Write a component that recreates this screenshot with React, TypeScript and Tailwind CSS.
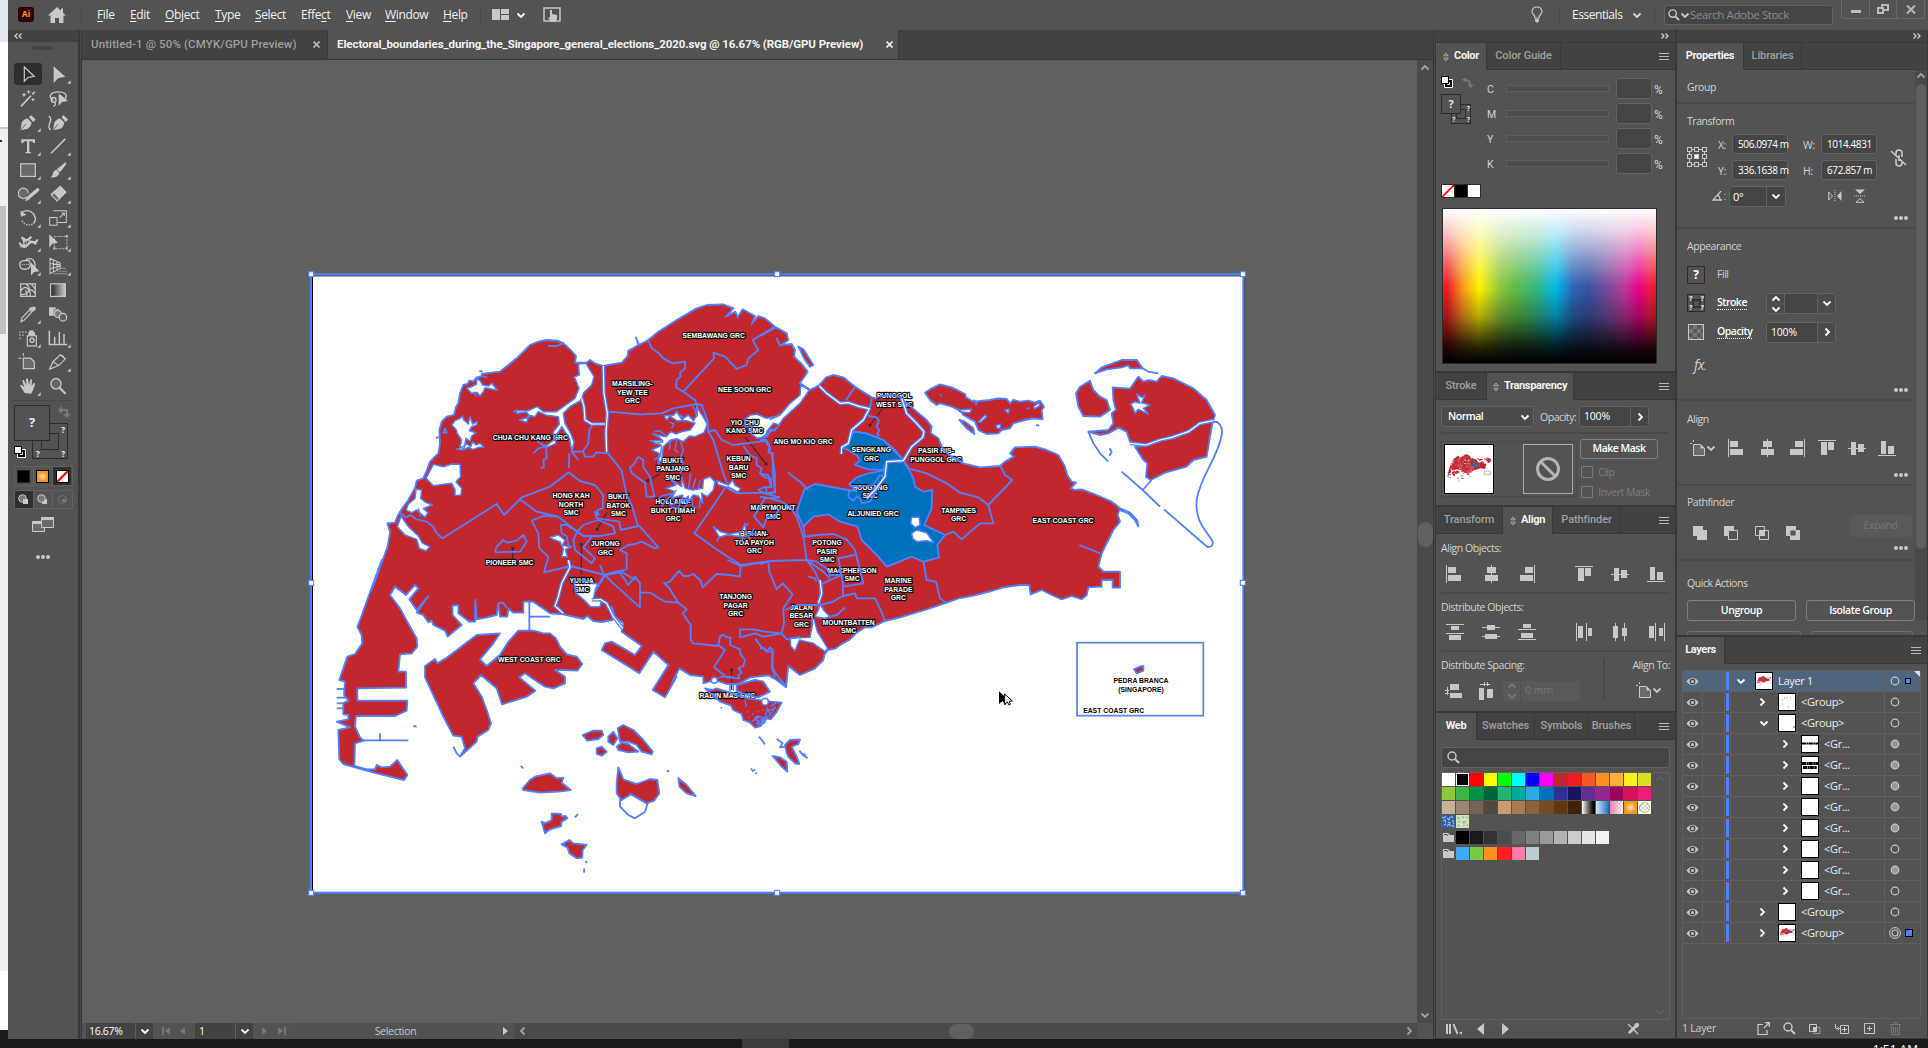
import React from "react";

/* ------------------------------------------------------------------ */
/* Geometry helpers for the map                                        */
/* ------------------------------------------------------------------ */

type Tile = [number, number];
const NW: Tile = [0, 0];
const SW: Tile = [0, 900];
const NE: Tile = [1380, 0];
const SE: Tile = [1380, 900];
const MID: Tile = [1020, 900];

function pts(tile: Tile, s: string): string {
  return s
    .trim()
    .split(/\s+/)
    .map((p) => {
      const [x, y] = p.split(",").map(Number);
      return `${x + tile[0]},${y + tile[1]}`;
    })
    .join(" ");
}

const MAINLAND = [
  pts(NW, "215,990 240,922 262,862 268,830 270,815 262,790 285,788 292,770 300,755 325,720 345,684 350,662 370,655 380,632 390,605 415,580 420,550 418,510 425,485 440,470 462,465 468,440 475,430 480,400 490,375 503,372 508,362 520,364 530,352 548,348 545,342 575,338 600,335 625,315 650,295 690,255 715,245 740,240 770,242 790,250 810,268 828,288 825,308 860,308 870,300 885,310 910,318 965,308 982,290 985,272 998,265 1015,255 1008,232 1017,255 1045,240 1075,215 1130,180 1190,145 1220,135 1270,133 1300,145 1278,170 1306,155 1313,172 1328,148 1365,168 1355,192 1375,168 1395,175 1425,200"),
  pts(NE, "48,202 80,220 85,240 60,258 50,235 60,256 95,252 105,270 102,290 125,312 143,335 120,370 150,390 178,375 198,352 220,345 250,352 285,380 335,412 345,415 362,408 400,405 420,412 440,430 470,455 500,480 515,500 512,520 535,535 550,570 575,590 610,610 660,622 720,618 735,605 762,590 750,580 765,562 825,560 860,570 895,585 915,620 922,645 935,665 948,668 932,685 945,690 965,688 1010,705 1055,725 1080,745 1110,758 1132,782 1135,800 1125,780 1105,760 1078,750 1073,765 1080,785 1060,810 1045,840 1025,880 1015,920 1030,935 1080,935 1080,983 1058,983 1058,960 1025,960 1025,980 985,982 980,1005 965,1018 935,1008 905,1018 875,1005 845,990 812,1003 808,975 780,975 730,982 695,993 640,1007 600,1014 560,1028 500,1048 460,1060 420,1072 375,1083 335,1102 315,1102 290,1118 270,1138 245,1152 225,1166 203,1170 193,1185 190,1200 165,1225 120,1245 85,1218 78,1282"),
  pts(MID, "410,360 385,346 330,352 295,372 260,372 222,360 190,370 190,350 150,345 118,325"),
  pts(SW, "1115,370 1130,350 1095,412 1058,390 1105,315 1060,275 1018,340 905,270 915,250 935,245 1005,285 1025,258 965,215 970,190 945,170 935,140 938,180 905,186 880,183 862,168 850,177 790,163 750,160 700,125 670,125 670,158 640,158 625,145 622,170 600,170 595,130 590,165 560,172 530,178 526,120 525,185 508,185 475,160 475,135 457,137 458,165 485,195 443,230 435,212 400,195 395,182 385,187 370,165 350,158 385,108 350,150 328,118 355,85 345,75 318,105 285,80 270,105 300,145 330,200 350,235 352,260 335,280 300,283 295,335 318,335 318,383 172,385 172,422 322,422 320,452 285,468 168,468 165,500 180,532 192,542 165,550 163,618 200,628 225,628 230,615 245,622 270,620 292,600 322,645 312,660 230,640 130,612 118,598 115,510 150,502 110,485 145,478 145,465 130,463 130,430 145,422 132,405 135,365 118,360 142,290 165,282 187,250 185,225 172,200 180,180 245,0"),
].join(" ");

const ISLANDS: string[] = [
  pts(SW, "375,318 405,297 412,310 440,293 530,225 600,220 580,250 540,298 560,318 600,285 625,245 655,212 700,212 730,220 750,220 768,235 780,260 800,283 830,290 847,312 832,332 790,330 765,330 795,350 795,370 760,385 735,380 690,350 675,340 658,352 706,392 680,410 606,433 590,385 543,345 520,370 545,410 560,450 573,490 565,510 532,530 530,545 480,590 495,565 485,530 460,527 430,470 375,352"),
  pts(SW, "848,525 880,512 905,512 910,525 895,537 862,542"),
  pts(SW, "925,530 940,515 952,535 940,555 925,545"),
  pts(SW, "953,505 970,495 1000,510 1030,540 1058,575 1055,583 1025,575 1010,555 985,545 960,545"),
  pts(SW, "950,560 965,548 985,552 1015,575 985,577 955,570"),
  pts(SW, "890,565 905,560 920,575 905,587 890,582"),
  pts(SW, "668,685 690,660 705,650 750,640 770,655 790,653 785,668 812,690 775,695 720,698 670,690"),
  pts(SW, "955,622 970,658 1010,672 1050,657 1072,660 1078,700 1062,722 1040,730 993,703 965,720 950,700 950,670"),
  pts(SW, "1135,655 1160,675 1187,708 1160,700 1138,680"),
  pts(SW, "725,785 735,790 755,780 755,760 783,762 785,770 797,768 802,775 785,785 783,798 750,808 735,820"),
  pts(SW, "785,853 808,840 820,850 860,855 848,870 847,893 830,895 808,880 802,862"),
  pts(MID, "195,385 215,390 230,385 270,398 320,415 395,425 425,428 410,455 392,478 380,475 362,498 345,503 330,488 310,480 305,462 280,450 272,436 240,425"),
  pts(MID, "290,375 345,360 370,365 390,395 355,412 310,400 290,392"),
  pts(NE, "115,260 130,268 160,315 150,320 135,300"),
  pts(NE, "495,398 515,385 540,373 575,382 615,402 618,412 640,425 690,420 715,415 740,417 750,430 760,420 780,425 805,422 825,428 840,422 852,440 845,450 848,478 820,475 795,480 760,490 750,505 725,510 715,520 680,522 655,510 645,485 610,465 600,452 575,440 540,430 530,435 512,422"),
  pts(NE, "598,480 615,485 640,505 643,522 620,505"),
  pts(NE, "948,400 960,380 990,362 1000,390 1020,410 1040,420 1050,450 1020,470 970,468 955,440"),
  pts(NE, "1005,340 1025,322 1085,300 1130,300 1148,325 1110,325 1105,316 1085,322 1040,328"),
  pts(NE, "1058,382 1110,386 1135,350 1150,365 1165,360 1190,365 1205,348 1240,355 1300,385 1340,420 1365,465 1360,480 1320,490 1280,515 1235,532 1200,540 1160,555 1110,545 1100,515 1075,503 1045,520 1020,525 985,515 1045,510 1060,490 1055,460 1068,450 1060,420"),
  pts(NE, "1125,560 1160,558 1205,542 1240,535 1285,518 1320,493 1358,485 1350,530 1340,590 1300,600 1280,620 1215,638 1172,660 1158,650 1162,610 1150,600"),
  pts(SE, "1122,328 1140,320 1150,318 1150,332 1130,340"),
  pts(SE, "75,555 90,540 120,538 115,552 95,560 110,590 118,612 105,610 85,590 80,580"),
  pts(SE, "38,588 60,592 80,605 82,635 65,620"),
];

const OPPOSITION: string[] = [
  pts(NE, "133,688 165,672 265,690 290,693 268,672 290,652 325,640 370,632 378,605 430,603 445,625 460,655 465,680 490,695 517,690 515,745 493,795 555,825 532,855 537,893 490,905 455,890 380,920 355,890 305,840 293,800 240,785 205,763 160,770 130,800 110,755"),
  pts(NE, "280,515 320,520 370,540 405,570 430,600 380,605 370,630 325,628 285,615 300,600 290,585 250,562 268,545"),
];

const WATER: string[] = [
  pts(NW, "835,312 858,310 882,350 875,375 850,400 845,420 810,440 790,460 795,490 812,520 822,545 816,575 808,535 785,500 778,512 765,530 768,550 740,562 712,545 738,558 762,540 760,515 778,492 775,470 740,466 715,455 705,470 686,465 680,487 658,480 690,470 680,457 650,460 648,452 685,452 712,440 730,455 770,455 790,440 825,415 837,385 823,350 838,345"),
  pts(NW, "455,495 465,482 480,475 488,468 490,478 505,492 510,470 518,492 532,485 530,495 515,500 508,512 528,518 515,528 510,545 498,535 492,568 480,560 485,540 472,520 468,508"),
  pts(NW, "470,568 490,560 500,552 512,560 518,545 528,555 540,550 552,562 535,562 520,568 505,562 490,570"),
  pts(NW, "500,385 515,380 530,372 530,355 540,362 548,375 565,378 575,370 592,390 578,388 555,383 550,395 540,408 530,397 515,400"),
  pts(NW, "378,655 400,613 430,620 455,612 480,613 482,650 468,665 485,685 483,705 465,707 465,688 455,670 400,677"),
  pts(NW, "348,687 365,690 362,715 378,728 397,735 370,745 384,758 375,772 350,750 335,758 318,750 325,732 345,715"),
  pts(NW, "292,800 303,768 325,800 355,828 368,850 390,860 378,873 358,865 350,838 315,825"),
  pts(NW, "1190,435 1196,450 1208,468 1222,492 1212,518 1185,530 1168,528 1150,545 1130,536 1112,540 1090,560 1085,600 1075,612 1078,580 1055,570 1085,556 1050,542 1088,542 1075,530 1058,522 1098,530 1112,515 1128,522 1145,515 1170,510 1185,490 1160,482 1130,482 1110,468 1100,480 1092,468 1120,466 1130,455 1145,478 1165,465 1180,482 1192,465"),
  pts(NW, "1098,685 1128,675 1108,655 1145,680 1145,650 1155,684 1178,690 1208,685 1210,658 1230,650 1245,665 1240,690 1222,710 1205,700 1208,730 1195,708 1180,705 1165,725 1165,708 1150,725 1148,705 1115,715 1125,695"),
  pts(NW, "1250,662 1285,675 1298,660 1305,676 1322,685 1312,700 1290,690 1280,682 1255,674"),
  pts(NW, "1240,800 1262,815 1290,822 1325,815 1335,790 1338,817 1368,822 1330,830 1280,825 1258,832"),
  pts(NW, "750,832 775,825 795,840 788,855 812,862 796,868 802,890 785,890 790,868 780,845 760,838"),
  pts(NW, "1335,478 1350,466 1370,462 1400,475 1440,466") + " " + pts(NE, "30,478 65,460 90,430 120,405 122,375 148,390 120,430 70,475 45,512 32,508 22,530 0,535") + " " + pts(NW, "1380,535 1420,510 1440,495 1420,490 1400,515 1398,530 1372,535 1352,520 1355,498 1335,500"),
  pts(SW, "822,65 850,60 880,70 893,72 885,95 880,118 905,118 900,140 872,140 850,118 828,100"),
  pts(NE, "455,772 478,772 480,795 465,803 452,790"),
  pts(NE, "455,820 470,810 500,818 512,835 522,848 500,842 470,845 458,835"),
  pts(SE, "180,130 190,150 210,170 195,175 165,170 175,150"),
  pts(SE, "90,235 150,232 158,190 155,175 162,178 172,215 203,265 195,275 160,250 118,240 105,272 92,258"),
  pts(NE, "1112,432 1125,425 1140,430 1130,402 1145,412 1155,405 1145,428 1170,435 1150,445 1165,462 1135,448 1125,460 1118,442"),
  pts(NE, "655,485 675,465 680,470 662,487"),
  pts(NE, "735,450 748,448 745,460"),
  pts(NE, "820,440 838,428 840,436 825,446"),
  pts(NE, "595,450 635,447 630,458 600,455"),
  pts(NE, "708,497 722,492 720,505 712,505"),
];

const RIVERS: string[] = [
  pts(NW, "910,318 912,400 922,460 918,520 920,575"),
  pts(NW, "845,415 852,440 855,480 875,492 915,492"),
  pts(NE, "178,378 200,400 240,430 265,428 300,440 328,446 310,480 275,510 265,550 245,562 244,582"),
  pts(NE, "425,415 440,460 470,490 492,515 488,532 455,560 430,602 380,605 375,650 345,690 320,715"),
  pts(SW, "805,0 810,22 785,70 775,110 765,138 790,160"),
  pts(SW, "875,120 900,118 920,130 940,170 968,205"),
  pts(NE, "1110,550 1158,555 1200,540 1235,532 1285,515 1320,490 1360,482"),
  pts(MID, "535,130 545,100 540,60"),
];

const BOUNDARIES: string[] = [
  pts(NW, "1045,240 1055,265 1075,278 1090,295 1118,310 1155,305 1155,325 1140,338 1142,350 1130,360 1128,382 1150,395 1185,420 1190,432 1120,445 1085,460 1020,463 928,455"),
  pts(NW, "1150,395 1242,295 1240,278 1275,290 1310,327 1340,315 1345,295 1375,270 1358,240 1425,200"),
  pts(NW, "1190,432 1205,435 1222,480 1225,515 1240,540 1273,650 1282,670"),
  pts(NW, "1222,515 1245,510 1265,540 1300,555 1395,543"),
  pts(NW, "1395,543 1408,560 1405,575 1415,580 1425,640 1425,698 1395,700 1375,690 1392,682 1415,682 1412,655 1395,652 1380,640 1385,625 1370,615 1370,595 1350,585 1330,558"),
  pts(NW, "1282,680 1320,700 1385,698 1440,712"),
  pts(NW, "1275,685 1183,820 1245,865 1280,888 1322,915 1400,905 1440,902"),
  pts(NW, "920,575 965,632 980,705 995,735 1013,795 1020,800 1075,862 1065,865 1025,845 1005,852 985,855 960,870 980,880 980,930"),
  pts(NW, "815,575 850,575 855,590 880,590 888,577 925,580"),
  pts(NW, "848,575 865,550 868,510 880,492"),
  pts(NW, "815,575 835,600"),
  pts(NW, "808,580 806,625"),
  pts(NW, "738,560 740,595 730,600 732,620 722,625"),
  pts(NW, "735,560 715,565 700,580"),
  pts(NW, "660,718 665,712 750,680 806,637 840,663 885,675 910,705 908,745 892,750 895,765 885,755 890,775 940,782 958,785 962,810 1015,798"),
  pts(NW, "300,758 318,772 330,765 350,778 380,785 400,800 410,820 428,835 590,732 612,765 660,718 710,755 775,770 832,815 850,795 895,780"),
  pts(NW, "832,815 850,828 900,828 945,820 940,800 895,780"),
  pts(NW, "695,782 730,768 775,770"),
  pts(NW, "695,782 715,820 718,865 745,890 732,937 812,918 915,945 960,932 1005,960"),
  pts(NW, "832,815 800,795 782,795 785,820 800,828 805,855 815,862"),
  pts(NW, "832,815 820,840 825,870 875,910 885,895 850,862 875,830"),
  pts(NW, "900,915 910,940"),
  pts(NW, "1015,590 1030,600 1030,622 1050,650 1063,710 1040,710 1035,668 995,640 990,622 1000,615 1015,590"),
  pts(NW, "585,875 590,860 610,840 622,848 650,842 670,825 680,845 660,875 585,877"),
  pts(NW, "745,258 770,258 790,250 772,242"),
  pts(NW, "885,990 915,943 975,930"),
  pts(NW, "1440,712 1395,715 1362,770 1390,802 1402,770 1420,775 1440,745"),
  pts(NW, "435,505 440,518 430,518 435,505"), pts(NW, "408,535 416,530"), pts(NW, "538,333 548,335"),
  pts(SW, "915,45 960,38 985,75 1005,50 1020,70 1020,142 940,70 915,45 885,95"),
  pts(SW, "1020,98 1050,98 1095,125 1135,128 1160,148 1148,160 1172,195 1172,240 1180,250 1255,258"),
  pts(SW, "1135,128 1105,80 1092,70 1110,65 1137,32 1150,48 1165,48 1180,42 1200,60 1208,82 1250,42 1290,45 1320,50 1322,15"),
  pts(SW, "1282,0 1322,18 1385,8 1405,5"),
  pts(SW, "340,498 350,500"), pts(SW, "192,541 325,541"), pts(SW, "240,541 240,520"),
  pts(SW, "688,120 688,212"), pts(SW, "690,170 750,170"),
  pts(SW, "110,387 135,387"), pts(SW, "110,413 135,413"), pts(SW, "110,430 130,430"), pts(SW, "110,445 130,445"),
  pts(SW, "460,560 470,580 480,590"), pts(SW, "593,130 610,128 620,145"),
  pts(SW, "662,618 670,625"), pts(SW, "1100,632 1108,634"), pts(SW, "825,772 834,762"), pts(SW, "858,902 860,910"), pts(SW, "852,938 853,925"),
  pts(SW, "960,715 960,740 985,765 1005,775 1035,755 1043,730"),
  pts(MID, "385,8 388,35 410,88 428,70 458,103 430,145 432,190 425,220 370,230 345,220 300,232 300,208 340,208 375,215 425,220 440,238 480,230"),
  pts(MID, "240,228 250,225 262,232 272,232 270,255 300,268 300,280 315,300 310,318 295,325 305,338 295,345 298,355 260,352 222,322 255,270 235,255 240,228"),
  pts(MID, "345,235 365,262 380,275 390,262 398,270 398,325 410,345 440,380"),
  pts(MID, "357,530 375,553"),
  pts(NE, "0,228 48,202"), pts(NE, "120,370 150,390"), pts(NE, "285,380 258,420"),
  pts(NE, "330,445 335,415"), pts(NE, "325,468 350,472 357,482 350,500 358,510 352,522 358,528"),
  pts(NE, "280,515 320,520 370,540 430,600 445,625 500,640 560,670 600,698 655,712 685,735 757,660 735,645 720,615"),
  pts(NE, "685,735 700,790 660,790 605,838 580,815 555,825"),
  pts(NE, "0,540 20,540 30,565 28,578 38,580 38,640 45,695 20,700 18,682 32,680 25,645 0,642"),
  pts(NE, "0,710 30,715 65,725 90,740 110,770 130,830 140,900 30,903 0,912"),
  pts(NE, "130,800 135,830 170,825 220,822 260,838 285,870 310,970 250,980 245,950 235,895 285,885"),
  pts(NE, "140,900 170,905 200,925 210,945 245,945 200,965 180,975"),
  pts(NE, "140,900 190,935 210,955"),
  pts(NE, "248,980 250,1008 235,1015 220,1025 180,1035"), pts(NE, "250,1008 285,1000 290,1015 345,1015 360,1045 375,1083"),
  pts(NE, "140,900 165,935 180,970 180,1010"), pts(NE, "145,950 165,955 170,965"),
  pts(NE, "490,905 500,960 528,965 540,1015 558,1028"),
  pts(NE, "210,1070 230,1065 256,1042"), pts(NE, "75,1050 110,1035 175,1035"),
  pts(NE, "958,855 1020,880"),
  pts(NE, "268,690 265,710 280,722 290,710 300,715 305,730 330,725 350,690 370,650 360,645 340,675 300,680 280,678"),
  pts(NE, "1148,325 1165,335 1195,340"), pts(NE, "985,515 1000,550 1020,580 1045,605"), pts(NE, "1085,635 1148,690 1200,740"), pts(NE, "1148,690 1175,660"),
  pts(NE, "1212,748 1335,855"), pts(NE, "1048,565 1055,575 1048,587"), pts(NE, "828,495 838,497"), pts(NE, "540,408 545,404"),
  pts(NE, "85,636 88,641 120,665 145,690"), pts(NE, "640,420 652,428 645,435"), pts(NE, "800,445 810,445"),
  pts(SE, "0,265 15,265 20,275 38,275 35,320 45,350"), pts(SE, "50,537 68,550 60,562 75,560"), pts(SE, "118,572 128,585 143,595"), pts(SE, "125,580 138,585"),
];

const TENDRILS: string[] = [
  pts(NW, "1112,540 1108,568"), pts(NW, "1142,545 1150,572 1142,590 1150,612"), pts(NW, "1130,540 1125,570 1135,578"),
  pts(NW, "1090,545 1062,552"), pts(NW, "1100,528 1078,512 1062,515"), pts(NW, "1115,505 1122,492 1108,486"),
  pts(NW, "1085,560 1080,590 1062,600"), pts(NW, "1190,470 1185,448 1178,440"), pts(NW, "1150,480 1142,462"),
  pts(NW, "1140,640 1148,628"), pts(NW, "1165,690 1172,640"), pts(NW, "1178,685 1188,655"), pts(NW, "1195,685 1200,660"),
  pts(NW, "1130,690 1100,720 1112,735 1135,728"), pts(NW, "1145,715 1135,745 1112,742"), pts(NW, "1160,710 1160,735 1145,750"),
  pts(NW, "1175,708 1178,740 1190,745"), pts(NW, "1120,700 1085,708 1075,718"), pts(NW, "1100,715 1085,740"), pts(NW, "1200,720 1198,745"),
  pts(NW, "1335,800 1345,790"), pts(NW, "1355,820 1362,805"), pts(NW, "1330,828 1325,845"), pts(NW, "1345,828 1350,838"), pts(NW, "1258,830 1250,845"),
  pts(NW, "640,456 652,450"), pts(NW, "520,395 530,410"), pts(NW, "562,352 550,350"), pts(NW, "355,745 362,770"),
];

const POINTERS = ["1080,642 1043,662", "922,755 892,808", "638,865 638,898", "844,853 844,943", "1335,530 1398,612", "1747,447 1710,495", "1295,1230 1295,1290"];
const POINTER_ENDS: [number, number][] = [[1043, 662], [892, 808], [638, 865], [844, 853], [1398, 612], [1710, 495], [1295, 1230]];

const LABELS: [number, number, string[]][] = [
  [1241, 227, ["SEMBAWANG GRC"]],
  [997, 371, ["MARSILING-", "YEW TEE", "GRC"]],
  [1334, 388, ["NEE SOON GRC"]],
  [1334, 487, ["YIO CHU", "KANG SMC"]],
  [1509, 544, ["ANG MO KIO GRC"]],
  [691, 533, ["CHUA CHU KANG GRC"]],
  [1118, 601, ["BUKIT", "PANJANG", "SMC"]],
  [1316, 596, ["KEBUN", "BARU", "SMC"]],
  [813, 707, ["HONG KAH", "NORTH", "SMC"]],
  [955, 710, ["BUKIT", "BATOK", "SMC"]],
  [1119, 725, ["HOLLAND-", "BUKIT TIMAH", "GRC"]],
  [1419, 743, ["MARYMOUNT", "SMC"]],
  [1363, 822, ["BISHAN-", "TOA PAYOH", "GRC"]],
  [916, 851, ["JURONG", "GRC"]],
  [629, 907, ["PIONEER SMC"]],
  [845, 962, ["YUHUA", "SMC"]],
  [1307, 1010, ["TANJONG", "PAGAR", "GRC"]],
  [1282, 1307, ["RADIN MAS SMC"]],
  [688, 1199, ["WEST COAST GRC"]],
  [1783, 407, ["PUNGGOL", "WEST SMC"]],
  [1714, 569, ["SENGKANG", "GRC"]],
  [1908, 573, ["PASIR RIS-", "PUNGGOL GRC"]],
  [1710, 682, ["HOUGANG", "SMC"]],
  [1719, 761, ["ALJUNIED GRC"]],
  [1976, 751, ["TAMPINES", "GRC"]],
  [2289, 781, ["EAST COAST GRC"]],
  [1581, 848, ["POTONG", "PASIR", "SMC"]],
  [1656, 931, ["MACPHERSON", "SMC"]],
  [1795, 962, ["MARINE", "PARADE", "GRC"]],
  [1504, 1042, ["JALAN", "BESAR", "GRC"]],
  [1646, 1087, ["MOUNTBATTEN", "SMC"]],
];

const HANDLES: [number, number][] = [
  [33, 42], [1431, 42], [2828, 42], [33, 968], [2828, 968], [33, 1898], [1431, 1898], [2828, 1898],
];

function Land() {
  return (
    <g>
      <polygon points={MAINLAND} fill="#c1272d" />
      {ISLANDS.map((p, i) => <polygon key={i} points={p} fill="#c1272d" />)}
      {OPPOSITION.map((p, i) => <polygon key={i} points={p} fill="#0071bc" />)}
    </g>
  );
}

function Canvas() {
  return (
    <svg className="block h-full w-full" viewBox="-654 -600 4005 2889">
      <rect x={34} y={44} width={2796} height={1854} fill="#fff" />
      <Land />
      <g fill="#fff">
        {WATER.map((p, i) => <polygon key={i} points={p} />)}
      </g>
      <g stroke="#3a2a2c" strokeWidth={3.5} fill="#3a2a2c">
        {POINTERS.map((p) => <polyline key={p} points={p} />)}
        {POINTER_ENDS.map(([x, y]) => <circle key={x} cx={x} cy={y} r={3} />)}
      </g>
      <g fontFamily='"Liberation Sans", Arial, sans-serif' fontWeight={700} fontSize={20.5} textAnchor="middle">
        {LABELS.map(([x, y, lines]) =>
          lines.map((l, i) => (
            <text key={l + i} x={x} y={y + 7 + i * 25.5} fill="#fff" stroke="#111" strokeWidth={7} strokeLinejoin="round" paintOrder="stroke">{l}</text>
          ))
        )}
        <g fill="#000">
          <text x={2523} y={1268}>PEDRA BRANCA</text>
          <text x={2523} y={1295}>(SINGAPORE)</text>
          <text x={2441} y={1358}>EAST COAST GRC</text>
        </g>
      </g>
      <g fill="none" stroke="#4f80ff" strokeWidth={5.5} strokeLinejoin="round">
        <polygon points={MAINLAND} />
        {ISLANDS.map((p, i) => <polygon key={i} points={p} />)}
        {OPPOSITION.map((p, i) => <polygon key={i} points={p} />)}
        {WATER.map((p, i) => <polygon key={i} points={p} strokeWidth={4.5} />)}
        {BOUNDARIES.map((p, i) => <polyline key={i} points={p} />)}
        {TENDRILS.map((p, i) => <polyline key={i} points={p} strokeWidth={4.5} />)}
        <path d="M2738 487C2755 480 2770 500 2765 525C2755 590 2700 650 2690 720C2685 790 2720 810 2738 845Q2740 862 2723 861L2715 855" />
        {RIVERS.map((p, i) => <polyline key={i} points={p} strokeWidth={11} />)}
      </g>
      <g fill="none" stroke="#fff" strokeWidth={3.5} strokeLinejoin="round">
        {RIVERS.map((p, i) => <polyline key={i} points={p} />)}
      </g>
      <g fill="none" stroke="#4f80ff" strokeWidth={4.5}>
        <circle cx={1243} cy={1261} r={9} fill="#fff" />
        <circle cx={1395} cy={1325} r={10} fill="#fff" />
        <path d="M1365 1375l15 18l12-20l-20-5zM1370 1392q15-25 25-5q-18 10-25 5M1410 1340l20-12M1405 1352l22-8M1415 1362l10-24M1402 1345l-6 28l16-6zM1355 1385l22-14M1380 1398l14-22M1340 1355h4M1356 1362h4M1372 1355h4M1388 1350h4M1345 1372h4M1262 1343h4M1353 1525l5 8l8-4M1365 1540h6M1290 1270v24M1300 1272v20M1250 1258l15-8h35M1335 1320l4 20" />
      </g>
      <rect x={2331} y={1148} width={379} height={219} fill="none" stroke="#5683e8" strokeWidth={5} />
      <rect x={37.5} y={47.5} width={2794} height={1850} fill="none" stroke="#000" strokeWidth={3} />
      <rect x={36} y={1893} width={2794} height={6} fill="#fff" />
      <rect x={33} y={43} width={2797} height={1855} fill="none" stroke="#4f80ff" strokeWidth={6} />
      {HANDLES.map(([x, y]) => (
        <rect key={x + "-" + y} x={x - 7} y={y - 7} width={15} height={15} fill="#fff" stroke="#4f80ff" strokeWidth={3.2} />
      ))}
      <path d="M2097 1294v38l11-9l6 12l5-3l-4-12h10z" fill="#000" />
      <path d="M2114 1302v31l8-7l5 9l4-2l-3-9l9-1z" fill="#fff" stroke="#000" strokeWidth={3} />
    </svg>
  );
}

function Thumb({ size }: { size: string }) {
  return (
    <span className={"block border border-black bg-white " + size}>
      <svg className="block h-full w-full" viewBox="-40 -430 2900 2900">
        <Land />
        <g fill="#fff">
          {WATER.map((p, i) => <polygon key={i} points={p} />)}
        </g>
        <g fill="none" stroke="#fff" strokeWidth={8}>
          {BOUNDARIES.map((p, i) => <polyline key={i} points={p} />)}
        </g>
        <rect x={2331} y={1148} width={379} height={219} rx={40} fill="#fff" stroke="#999" strokeWidth={40} />
      </svg>
    </span>
  );
}

/* ------------------------------------------------------------------ */
/* Small icons                                                         */
/* ------------------------------------------------------------------ */

function Chevron({ dir = "down", c = "text-white" }: { dir?: "down" | "up" | "right" | "left"; c?: string }) {
  const d = { down: "M1.5 3.5L5 7L8.5 3.5", up: "M1.5 6.5L5 3L8.5 6.5", right: "M3.5 1.5L7 5L3.5 8.5", left: "M6.5 1.5L3 5L6.5 8.5" }[dir];
  return (
    <svg className={"h-[10px] w-[10px] shrink-0 " + c} viewBox="0 0 10 10"><path d={d} fill="none" stroke="currentColor" strokeWidth={1.8} /></svg>
  );
}

function Collapse({ left = false }: { left?: boolean }) {
  return (
    <svg className="h-[6px] w-[8px]" viewBox="0 0 8 6">
      <path d={left ? "M3.5 .5L1 3L3.5 5.5M7.5 .5L5 3L7.5 5.5" : "M.5 .5L3 3L.5 5.5M4.5 .5L7 3L4.5 5.5"} fill="none" stroke="#d0d0d0" strokeWidth={1.3} />
    </svg>
  );
}

function PanelMenu() {
  return (
    <span className="mr-[6px] ml-auto flex w-[10px] flex-col gap-[2px] self-center">
      <i className="h-px bg-[#b8b8b8]" /><i className="h-px bg-[#b8b8b8]" /><i className="h-px bg-[#b8b8b8]" />
    </span>
  );
}

function Updown() {
  return (
    <svg className="mr-[5px] h-[10px] w-[6px]" viewBox="0 0 6 10"><path d="M.8 3.8L3 1L5.2 3.8zM.8 6.2L3 9L5.2 6.2z" fill="none" stroke="#aaa" /></svg>
  );
}

function Dots() {
  return (
    <span className="flex gap-px">
      <i className="h-[4px] w-[4px] rounded-full bg-[#c8c8c8]" /><i className="h-[4px] w-[4px] rounded-full bg-[#c8c8c8]" /><i className="h-[4px] w-[4px] rounded-full bg-[#c8c8c8]" />
    </span>
  );
}

const ALIGN: Record<string, string> = {
  left: "M0 0h1v18H0zM2 2h8v6H2zM2 10h13v6H2z",
  centerH: "M8.500 0h1v18h-1zM4.500 2h9v6h-9zM2.500 10h13v6h-13z",
  right: "M16 0h1v18h-1zM7 2h8v6H7zM2 10h13v6H2z",
  top: "M0 1h18v1H0zM3 3h6v13H3zM10 3h6v8h-6z",
  centerV: "M0 8.500h18v1H0zM3 3h5v13H3zM10 5h6v8h-6z",
  bottom: "M0 16h18v1H0zM3 2h5v13H3zM10 7h6v8h-6z",
  dTop: "M0 1h18v1H0zM5 3h8v4H5zM0 10h18v1H0zM3 12h12v5H3z",
  dMid: "M0 4h18v1H0zM5 2h8v5H5zM0 13h18v1H0zM3 11h12v5H3z",
  dBot: "M0 6h18v1H0zM5 1h8v4H5zM0 16h18v1H0zM3 10h12v5H3z",
  dLeft: "M1 0h1v18H1zM3 3h5v12H3zM11 0h1v18h-1zM13 5h4v8h-4z",
  dCen: "M4 0h1v18H4zM2 3h5v12H2zM13 0h1v18h-1zM11 5h5v8h-5z",
  dRight: "M8 0h1v18H8zM2 3h5v12H2zM17 0h1v18h-1zM12 5h4v8h-4z",
  sV: "M5 1.500h9v6H5zM5 10.500h12v5H5zM0 7.500h4v1H0zM0 10.500h4v1H0zM1.500 5h1v8h-1z",
  sH: "M2 6h5v12H2zM10 7h6v9h-6zM3 1.500h10v1H3zM6.500 0h1v4h-1zM9.500 0h1v4h-1z",
};

function AlignIcon({ n }: { n: string }) {
  return (
    <svg className="h-[18px] w-[18px] shrink-0" viewBox="0 0 18 18" shapeRendering="crispEdges"><path d={ALIGN[n]} fill="#c8c8c8" /></svg>
  );
}

function ArtboardIcon() {
  return (
    <span className="flex items-center">
      <svg className="h-[16px] w-[16px]" viewBox="0 0 16 16">
        <path d="M3.500 4.500h7l4 4v7h-11z" fill="#6b6b6b" stroke="#c8c8c8" /><path d="M10.500 4v4.500h4.500z" fill="#c8c8c8" /><path d="M0 3.500h2M3.500 0v2" stroke="#c8c8c8" />
      </svg>
      <Chevron c="text-[#c8c8c8]" />
    </span>
  );
}

/* ------------------------------------------------------------------ */
/* Tool bar                                                            */
/* ------------------------------------------------------------------ */

const G = "#c8c8c8";
const st = { fill: "none", stroke: G, strokeWidth: 4 };

const TOOLS: { flyout: boolean; art: React.ReactNode }[] = [
  { flyout: false, art: <path d="M76 105V146L87 135L106 132Z" fill="none" stroke={G} strokeWidth={3.5} /> },
  { flyout: true, art: <path d="M164 103V151L177 137L199 133Z" fill={G} /> },
  { flyout: false, art: <g><path d="M66 217L96 187" stroke={G} strokeWidth={5} /><path d="M100 183l7-7" stroke={G} strokeWidth={5} /><path d="M75 177l2 5l5 2l-5 2l-2 5l-2-5l-5-2l5-2zM89 170l2 4l4 2l-4 2l-2 4l-2-4l-4-2l4-2zM102 192l2 4l4 2l-4 2l-2 4l-2-4l-4-2l4-2z" fill={G} /></g> },
  { flyout: false, art: <g><path d="M163 200C145 190 155 176 178 176C200 176 207 187 198 195" {...st} /><circle cx={164} cy={199} r={7} {...st} /><path d="M166 205Q174 212 163 217" {...st} /><path d="M179 180V216L189 205L207 202Z" fill={G} /></g> },
  { flyout: true, art: <g><path d="M65 285L68 263Q76 252 86 252L98 264Q96 276 87 281Z" fill={G} /><path d="M90 248L96 242L110 255L103 262Z" fill={G} /><path d="M66 284L80 268" stroke="#535353" strokeWidth={2.500} /></g> },
  { flyout: false, art: <g><path d="M162 285L166 263Q174 252 184 252L196 264Q194 276 184 281Z" fill={G} /><path d="M188 248L193 242L207 255L200 262Z" fill={G} /><path d="M163 284L177 268" stroke="#535353" strokeWidth={2.500} /><path d="M149 245Q160 252 152 264Q146 282 156 284" {...st} /></g> },
  { flyout: true, art: <path d="M67 311H108V322H103Q102 317 97 317H91V345Q91 348 96 348V351H79V348Q84 348 84 345V317H78Q73 317 72 322H67Z" fill={G} /> },
  { flyout: true, art: <path d="M156 351L199 310" stroke={G} strokeWidth={4.500} /> },
  { flyout: true, art: <rect x={65} y={381} width={44} height={36} fill="#6a6a6a" stroke={G} strokeWidth={3.500} /> },
  { flyout: true, art: <g><path d="M200 376Q203 378 200 384L183 405L173 397Z" fill={G} /><path d="M172 398L181 407Q178 421 154 420Q161 416 162 407Q165 399 172 398Z" fill={G} /></g> },
  { flyout: true, art: <g><circle cx={73} cy={465} r={15} fill="#6a6a6a" stroke={G} strokeWidth={3.500} /><path d="M86 477L120 446Z" stroke="#535353" strokeWidth={16} /><path d="M90 476L116 455" stroke={G} strokeWidth={10} strokeLinecap="round" /><path d="M78 488L84 475L92 483Z" fill={G} /></g> },
  { flyout: true, art: <g><path d="M154 468L184 443L203 462L174 489Z" fill={G} /><path d="M157 470L165 463L182 480L174 486Z" fill="#6a6a6a" stroke={G} strokeWidth={3} /></g> },
  { flyout: true, art: <g><path d="M67 520Q86 508 102 522Q116 540 103 551" {...st} /><path d="M64 515L66 532L82 526Z" fill={G} /><path d="M69 543Q80 560 101 553" {...st} strokeDasharray="4 4" /></g> },
  { flyout: true, art: <g><path d="M163 515H202V548H176" {...st} strokeWidth={3} /><rect x={152} y={534} width={22} height={22} {...st} strokeWidth={3} /><path d="M182 534L195 522M188 521H196V529" {...st} strokeWidth={3} /></g> },
  { flyout: true, art: <g><path d="M61 605Q70 622 82 616Q92 603 103 604Q114 605 115 596M67 590Q77 597 76 615M72 592Q82 606 97 589M88 602Q104 602 112 610" {...st} strokeWidth={6} /><path d="M62 620L96 588" stroke={G} strokeWidth={2.500} /><circle cx={79} cy={607} r={4} fill="#535353" stroke={G} strokeWidth={2} /></g> },
  { flyout: true, art: <g><path d="M151 582V620L160 609L177 606Z" fill={G} /><rect x={166} y={588} width={38} height={35} {...st} strokeWidth={2.500} strokeDasharray="6 3" /><path d="M200 584h6v6h-6zM200 619h6v6h-6zM163 619h6v6h-6z" fill={G} /></g> },
  { flyout: true, art: <g><path d="M80 655Q100 645 107 662Q112 680 98 682M64 676Q57 657 76 657L90 657Q98 668 90 678Q72 686 64 676" {...st} /><path d="M68 668H92" stroke={G} strokeWidth={3} strokeDasharray="3 3" /><path d="M96 662V699L105 689L121 687Z" fill={G} /></g> },
  { flyout: true, art: <g><path d="M153 650V694L184 679V664ZM153 665L184 669M153 680L184 673M163 655V689M174 660V684" {...st} strokeWidth={3} /><path d="M186 679H201M175 687H204M163 694H206" stroke="#888" strokeWidth={3} /></g> },
  { flyout: false, art: <path d="M65 723H109V759H65ZM66 743Q80 722 93 746Q95 758 91 759M80 723Q94 733 90 741Q85 753 66 754M109 739Q99 726 97 723M109 752Q101 737 90 741M80 740L84 758" {...st} strokeWidth={3.500} /> },
  { flyout: false, art: <g><defs><linearGradient id="tg"><stop offset="0" stopColor="#222" /><stop offset="1" stopColor="#ccc" /></linearGradient></defs><rect x={155} y={723} width={44} height={36} fill="url(#tg)" stroke={G} strokeWidth={3.500} /></g> },
  { flyout: true, art: <g><path d="M66 831L69 820L92 797L98 804L76 826Z" {...st} strokeWidth={3.500} /><path d="M89 792L101 803L110 797Q112 786 102 788Z" fill={G} /></g> },
  { flyout: false, art: <g><rect x={150} y={790} width={20} height={24} fill={G} /><rect x={163} y={794} width={18} height={20} rx={4} fill="#999" /><circle cx={177} cy={809} r={10} fill="#777" stroke={G} strokeWidth={3} /><circle cx={192} cy={818} r={11} fill="#5f5f5f" stroke={G} strokeWidth={3.500} /></g> },
  { flyout: true, art: <g><path d="M60 858h5v5h-5zM69 858h5v5h-5zM78 858h5v5h-5zM60 867h5v5h-5zM69 867h5v5h-5zM60 876h5v5h-5z" fill="#999" /><rect x={85} y={871} width={27} height={29} fill="none" stroke={G} strokeWidth={3.500} /><path d="M91 856h13v5h4v9H88v-9h3z" fill={G} /><circle cx={99} cy={884} r={6} {...st} /></g> },
  { flyout: true, art: <path d="M151 856V896H205M167 893V874M181 893V860M195 893V866" {...st} strokeWidth={4.500} /> },
  { flyout: false, art: <g><path d="M73 935H95L106 945V965H73Z" fill="#6a6a6a" stroke={G} strokeWidth={3.500} /><path d="M58 935H67M73 920V929" {...st} strokeWidth={3} /></g> },
  { flyout: true, art: <path d="M152 966L162 945L184 925L199 937L179 956ZM162 945L178 955M188 926L195 932" {...st} strokeWidth={3.500} /> },
  { flyout: true, art: <path d="M77 1034L64 1015Q63 1010 68 1011L76 1018L70 1000Q71 995 75 998L82 1012L81 994Q84 990 87 994L90 1011L94 996Q98 993 99 998L98 1014L104 1006Q109 1004 108 1009L102 1026L96 1036Z" fill={G} /> },
  { flyout: false, art: <g><circle cx={171} cy={1008} r={15} fill="#666" stroke={G} strokeWidth={4} /><path d="M182 1019L198 1035" stroke={G} strokeWidth={6} strokeLinecap="round" /></g> },
];

function Toolbar() {
  return (
    <div className="flex w-[71px] shrink-0 flex-col items-center border-r border-[#383838] bg-[#535353]">
      <div className="flex h-[12px] w-full shrink-0 items-center bg-[#424242] pl-[6px]"><Collapse left /></div>
      <svg className="mt-[4px] h-[4px] w-[20px] shrink-0" viewBox="0 0 20 4"><path d="M1 0v4M3 0v4M5 0v4M7 0v4M9 0v4M11 0v4M13 0v4M15 0v4M17 0v4M19 0v4" stroke="#383838" /></svg>
      <div className="mt-[12px] grid grid-cols-[28px_28px] gap-x-0.5">
        {TOOLS.map((t, i) => {
          const cx = i % 2 ? 177 : 87;
          const cy = 125 + 68.4 * Math.floor(i / 2);
          return (
            <div key={i} className="h-[24px] py-[1px]">
              <div className={i === 0 ? "h-[22px] rounded-[3px] bg-[#2e2e2e]" : "h-[22px]"}>
                <svg className="block h-[22px] w-[28px] overflow-visible" preserveAspectRatio="none" viewBox={`${cx - 42} ${cy - 31.35} 84 62.7`}>
                  {t.art}
                  {t.flyout && <path d={`M${cx + 38} ${cy + 18}v10h-10z`} fill={G} />}
                </svg>
              </div>
            </div>
          );
        })}
      </div>
      <div className="mt-[2px] h-px w-[60px] shrink-0 bg-[#484848]" />
      <div className="relative mt-[4px] h-[54px] w-[58px] shrink-0 font-['Open_Sans'] text-[11px] font-bold text-[#e4ecf4]">
        <div className="absolute top-[18px] left-[18px] h-[36px] w-[36px] border border-[#2c2c2c]">
          <div className="absolute top-[9px] left-[8px] h-[17px] w-[18px] border border-[#2c2c2c]" />
          <span className="absolute top-[1px] right-[2px] text-[8px] leading-[9px]">?</span>
          <span className="absolute right-[2px] bottom-[0px] text-[8px] leading-[9px]">?</span>
          <span className="absolute bottom-[0px] left-[3px] text-[8px] leading-[9px]">?</span>
        </div>
        <div className="absolute top-0 left-0 flex h-[36px] w-[36px] items-center justify-center border border-[#2c2c2c] bg-[#535353] text-[13px]">?</div>
        <svg className="absolute top-px left-[44px] h-[13px] w-[13px]" viewBox="0 0 13 13"><path d="M3 4H9V9" fill="none" stroke="#777" strokeWidth={2} /><path d="M4 0v8L0 4zM5 8h8l-4 4z" fill="#777" /></svg>
        <MiniDefault cls="absolute left-0 top-[41px]" />
      </div>
      <div className="mt-[7px] flex h-[20px] w-[59px] shrink-0 border border-[#626262]">
        <div className="flex flex-1 items-center justify-center border-r border-[#626262]"><i className="h-[13px] w-[13px] border border-[#222] bg-black" /></div>
        <div className="flex flex-1 items-center justify-center border-r border-[#626262]"><i className="h-[13px] w-[13px] border border-black bg-[radial-gradient(#ffe0b8,#f7931e_60%)]" /></div>
        <div className="flex flex-1 items-center justify-center bg-[#2e2e2e]"><NoneSwatch cls="h-[13px] w-[13px]" /></div>
      </div>
      <div className="mt-[4px] flex h-[19px] w-[59px] shrink-0 border border-[#626262]">
        {[0, 1, 2].map((n) => (
          <div key={n} className={"flex flex-1 items-center justify-center " + (n === 0 ? "bg-[#2e2e2e]" : "border-l border-[#626262]")}>
            <svg className={n === 2 ? "h-[11px] w-[11px] opacity-30" : "h-[11px] w-[11px]"} viewBox="0 0 11 11">
              {n === 0 ? <g><circle cx={4.500} cy={4.500} r={3.800} fill="#777" stroke={G} /><path d="M5 5h5v5H5z" fill={G} /></g> : n === 1 ? <g><path d="M5 5h5v5H5z" fill={G} /><circle cx={4.500} cy={4.500} r={3.800} fill="#777" stroke={G} /></g> : <g><circle cx={5.500} cy={5.500} r={4} fill="none" stroke={G} /><path d="M5 5h4v3H5z" fill={G} /></g>}
            </svg>
          </div>
        ))}
      </div>
      <svg className="mt-[8px] h-[16px] w-[23px] shrink-0" viewBox="0 0 23 16"><path d="M.5 4.500h12v10H.500z" fill="#6a6a6a" stroke={G} /><path d="M0 4h13v3H0z" fill={G} /><path d="M9.500 1.500h12v9h-12z" fill="#6a6a6a" stroke={G} /><path d="M9 0h13v3H9z" fill={G} /></svg>
      <div className="mt-[22px]"><Dots /></div>
    </div>
  );
}

function MiniDefault({ cls = "" }: { cls?: string }) {
  return (
    <svg className={"h-[12px] w-[12px] " + cls} viewBox="0 0 12 12">
      <path d="M3.500 3.500h8v8h-8z" fill="#000" stroke="#fff" /><path d="M6.500 6.500h2v2h-2z" fill="#535353" stroke="#fff" /><path d="M.5.500h7v7H.500z" fill="#fff" stroke="#000" />
    </svg>
  );
}

function NoneSwatch({ cls }: { cls: string }) {
  return (
    <svg className={cls + " block border border-black bg-white"} viewBox="0 0 12 12"><path d="M0 12L12 0" stroke="#f00" strokeWidth={2.400} /></svg>
  );
}

/* ------------------------------------------------------------------ */
/* Panels                                                              */
/* ------------------------------------------------------------------ */

function Tabs({ items, active, arrow = true, widths, menu = true }: { items: string[]; active: number; arrow?: boolean; widths: string[]; menu?: boolean }) {
  return (
    <div className="flex h-[27px] shrink-0 bg-[#424242] font-['Roboto'] text-[11px] font-medium">
      {items.map((t, i) => (
        <div key={t} className={"flex shrink-0 items-center justify-center whitespace-nowrap border-r border-[#383838] " + widths[i] + (i === active ? " bg-[#535353] font-bold tracking-[-0.35px] text-[#f2f2f2]" : " border-b tracking-[-0.1px] text-[#a0a0a0]")}>
          {i === active && arrow && <Updown />}
          {t}
        </div>
      ))}
      <div className="flex flex-1 border-b border-[#383838]">{menu && <PanelMenu />}</div>
    </div>
  );
}

const FIELD = "flex items-center rounded-[3px] border border-[#636363] bg-[#454545] font-['Open_Sans'] text-[10.5px] leading-none text-white tracking-[-0.2px] whitespace-nowrap";
const LABEL = "font-['Open_Sans'] text-[10.5px] tracking-[-0.45px] text-[#d2d2d2]";

const SWATCHES = [
  ["#ffffff", "#000000", "#ff0000", "#ffff00", "#00ff00", "#00ffff", "#0000ff", "#ff00ff", "#c1272d", "#ed1c24", "#f15a24", "#f7931e", "#fbb03b", "#fcee21", "#d9e021"],
  ["#8cc63f", "#39b54a", "#009245", "#006837", "#22b573", "#00a99d", "#29abe2", "#0071bc", "#2e3192", "#1b1464", "#662d91", "#93278f", "#9e005d", "#d4145a", "#ed1e79"],
  ["#c7b299", "#998675", "#736357", "#534741", "#c69c6d", "#a67c52", "#8c6239", "#754c24", "#603813", "#42210b"],
];
const GRAYS = ["#000000", "#1a1a1a", "#333333", "#4d4d4d", "#666666", "#808080", "#999999", "#b3b3b3", "#cccccc", "#e6e6e6", "#f2f2f2"];
const BRIGHTS = ["#3fa9f5", "#7ac943", "#ff931e", "#ff1d25", "#ff7bac", "#bdccd4"];

function Swatch({ c, sel = false }: { c: string; sel?: boolean }) {
  return <i className={"h-[13px] w-[13px] " + (sel ? "border border-white outline outline-1 outline-black -outline-offset-2" : "")} style={{ background: c }} />;
}

function Folder() {
  return <svg className="h-[13px] w-[13px]" viewBox="0 0 13 13"><path d="M1 2h5l2 2h4v7H1z" fill={G} /><path d="M2 3.500h3l1 1.500" fill="none" stroke="#444" /></svg>;
}

function ColorPanel() {
  return (
    <div className="flex h-[301px] flex-col bg-[#535353] pl-[5px]">
      <div className="flex h-[114px] pt-[5px]">
        <div className="relative h-[60px] w-[40px]">
          <MiniDefault cls="absolute left-0 top-[1px]" />
          <svg className="absolute top-[2px] left-[21px] h-[12px] w-[12px]" viewBox="0 0 13 13"><path d="M2 3Q9 3 9 9" fill="none" stroke="#777" strokeWidth={2} /><path d="M4 0v6L0 3zM6 8h7l-3.500 4z" fill="#777" /></svg>
          <div className="absolute top-[29px] left-[10px] h-[20px] w-[20px] border border-[#2c2c2c] font-['Open_Sans'] text-[7px] leading-[7px] font-bold text-[#cfe0f0]">
            <div className="absolute top-[4px] left-[4px] h-[10px] w-[10px] border border-[#2c2c2c]" />
            <span className="absolute top-0 right-0">?</span><span className="absolute right-0 bottom-0">?</span><span className="absolute bottom-0 left-0">?</span>
          </div>
          <div className="absolute top-[19px] left-0 flex h-[20px] w-[20px] items-center justify-center border border-[#2c2c2c] bg-[#535353] font-['Open_Sans'] text-[11px] font-bold text-[#e4e4e4]">?</div>
        </div>
        <div className="flex flex-col pt-[1px] pl-[6px]">
          {["C", "M", "Y", "K"].map((c) => (
            <div key={c} className="flex h-[25px] shrink-0 items-center">
              <span className="w-[19px] pt-[2px] font-['Roboto'] text-[10.5px] text-[#d2d2d2]">{c}</span>
              <span className="h-[7px] w-[103px] border border-[#5f5f5f] bg-[#4d4d4d]" />
              <span className="ml-[7px] h-[21px] w-[36px] rounded-[3px] border border-[#636363] bg-[#454545]" />
              <span className="ml-[2px] pt-[2px] font-['Roboto'] text-[12px] text-[#d2d2d2]">%</span>
            </div>
          ))}
        </div>
      </div>
      <div className="flex h-[14px] w-[40px] border border-[#2c2c2c] bg-white">
        <svg className="h-[12px] w-[12px]" viewBox="0 0 12 12"><path d="M0 12L12 0" stroke="#f00" strokeWidth={1.800} /></svg>
        <i className="w-[14px] border-x border-[#2c2c2c] bg-black" />
      </div>
      <div className="mt-[10px] ml-[1px] h-[156px] w-[215px] border border-[#2c2c2c] bg-[linear-gradient(to_bottom,#fff_0%,rgba(255,255,255,.75)_15%,rgba(255,255,255,0)_50%,rgba(0,0,0,0)_52%,rgba(0,0,0,.3)_70%,rgba(0,0,0,.85)_90%,#000_100%),linear-gradient(to_right,#ed1c24_0%,#ed1c24_2%,#f7941d_9%,#fff200_17%,#8dc63f_27%,#5fbc44_34%,#39b77c_43%,#00b9e8_53%,#2e66b8_61%,#3953a4_68%,#7f4a9d_78%,#c0349a_86%,#ec008c_92%,#ed1c45_97%,#ed1c24_100%)]" />
    </div>
  );
}

function TransparencyPanel() {
  return (
    <div className="h-[105px] bg-[#535353] px-[5px] pt-[6px]">
      <div className="flex items-center">
        <div className={FIELD + " h-[21px] w-[93px] justify-between !bg-[#4b4b4b] pr-[3px] pl-[6px] font-semibold !tracking-[-0.5px]"}>Normal <Chevron /></div>
        <span className={LABEL + " ml-[6px] w-[39px] pt-[3px]"}>Opacity:</span>
        <div className={FIELD + " h-[21px] w-[70px]"}>
          <span className="flex-1 pl-[4px]">100%</span>
          <span className="flex h-full w-[18px] items-center justify-center border-l border-[#636363]"><Chevron dir="right" /></span>
        </div>
      </div>
      <div className="mt-[5px] h-[2px] w-[228px] bg-[#4a4a4a]" />
      <div className="mt-[7px] flex h-[58px]">
        <div className="flex h-[56px] w-[136px] gap-[29px] rounded-[2px] border border-[#4b4b4b] px-[2px] pt-[2px]">
          <Thumb size="h-[50px] w-[50px]" />
          <span className="flex h-[50px] w-[50px] items-center justify-center border border-[#a8a8a8]">
            <svg className="h-[26px] w-[26px]" viewBox="0 0 26 26"><circle cx={13} cy={13} r={10.500} fill="none" stroke="#b4b4b4" strokeWidth={3} /><path d="M5.500 5.500l15 15" stroke="#b4b4b4" strokeWidth={3} /></svg>
          </span>
        </div>
        <div className="-mt-[2px] ml-[3px] flex flex-col">
          <div className="flex h-[20px] w-[78px] items-center justify-center rounded-[3px] border border-[#808080] font-['Open_Sans'] text-[10.5px] font-semibold tracking-[-0.5px] whitespace-nowrap text-white">Make Mask</div>
          {["Clip", "Invert Mask"].map((t) => (
            <div key={t} className={LABEL + " flex h-[20px] items-end gap-[5px] whitespace-nowrap !text-[#7c7c7c]"}>
              <i className="mb-[1px] ml-[1px] h-[12px] w-[12px] rounded-[1px] border border-[#7c7c7c]" /><span className="leading-[14px]">{t}</span>
            </div>
          ))}
        </div>
      </div>
    </div>
  );
}

function AlignRow({ names }: { names: string[] }) {
  return (
    <div className="flex gap-[18px] pl-[5px]">
      {names.map((n, i) => <span key={n} className={i === 3 ? "ml-[21px]" : ""}><AlignIcon n={n} /></span>)}
    </div>
  );
}

function AlignPanel() {
  return (
    <div className="h-[177px] bg-[#535353] px-[5px] pt-[7px]">
      <div className={LABEL + " h-[24px]"}>Align Objects:</div>
      <AlignRow names={["left", "centerH", "right", "top", "centerV", "bottom"]} />
      <div className="mt-[9px] h-[2px] bg-[#4a4a4a]" />
      <div className={LABEL + " mt-[6px] h-[23px]"}>Distribute Objects:</div>
      <AlignRow names={["dTop", "dMid", "dBot", "dLeft", "dCen", "dRight"]} />
      <div className="mt-[9px] h-[2px] bg-[#4a4a4a]" />
      <div className="flex pt-[6px]">
        <div className="w-[164px] border-r-2 border-[#4a4a4a]">
          <div className={LABEL + " h-[23px]"}>Distribute Spacing:</div>
          <div className="flex items-center pl-[4px]">
            <AlignIcon n="sV" /><span className="w-[14px]" /><AlignIcon n="sH" />
            <div className="ml-[8px] flex h-[20px] w-[77px] items-center rounded-[2px] bg-[#595959]">
              <span className="flex h-full w-[18px] flex-col items-center border-r border-[#505050]"><Chevron dir="up" c="text-[#777]" /><Chevron c="text-[#777]" /></span>
              <span className={LABEL + " pl-[4px] !tracking-normal !text-[#777]"}>0 mm</span>
            </div>
          </div>
        </div>
        <div className="flex flex-1 flex-col">
          <div className={LABEL + " h-[24px] text-right whitespace-nowrap"}>Align To:</div>
          <div className="pl-[31px]"><ArtboardIcon /></div>
        </div>
      </div>
    </div>
  );
}

function SwatchesPanel() {
  return (
    <div className="flex flex-1 flex-col bg-[#535353] px-[5px] pt-[7px]">
      <div className="flex h-[21px] shrink-0 items-center rounded-[3px] border border-[#636363] bg-[#454545] pl-[5px]">
        <svg className="h-[13px] w-[13px]" viewBox="0 0 13 13"><circle cx={5} cy={5} r={4} fill="none" stroke={G} strokeWidth={1.500} /><path d="M8 8l4 4" stroke={G} strokeWidth={2} /></svg>
      </div>
      <div className="mt-[4px] flex h-[248px] shrink-0 border border-[#606060]">
        <div className="flex flex-col gap-px">
          {SWATCHES.map((row, r) => (
            <div key={r} className="flex gap-px">
              {row.map((c, i) => <Swatch key={c} c={c} sel={r === 0 && i === 1} />)}
              {r === 2 && (
                <>
                  <i className="h-[13px] w-[13px] bg-linear-to-r from-white to-black" />
                  <i className="h-[13px] w-[13px] bg-linear-to-r from-[#cfe6f7] to-[#0071bc]" />
                  <i className="h-[13px] w-[13px] bg-[linear-gradient(to_right,#ff7bac,transparent),repeating-conic-gradient(#ddd_0_25%,#fff_0_50%)] bg-[length:100%_100%,4px_4px]" />
                  <i className="h-[13px] w-[13px] bg-[radial-gradient(#ffe0b8,#f7931e_60%)]" />
                  <i className="h-[13px] w-[13px] bg-white p-px"><i className="block h-[11px] w-[11px] rounded-full border border-[#d6c04c] bg-[repeating-conic-gradient(#ccc_0_25%,#fff_0_50%)] bg-[length:4px_4px]" /></i>
                </>
              )}
            </div>
          ))}
          <div className="flex gap-px">
            <svg className="h-[13px] w-[13px] bg-[#2f5f9f]" viewBox="0 0 13 13"><path d="M0 2l2 1l2-2M5 3l2 2l1-3M9 1l2 2M1 6l2-1l1 3M6 7l3 1M10 5l2 2M2 10l2-1M5 11l2-2l2 2M10 10l2 2M11 9l1-1" fill="none" stroke="#9dbbe0" strokeWidth={1.2} /></svg>
            <svg className="h-[13px] w-[13px] bg-[#dbe3ae]" viewBox="0 0 13 13"><path d="M1 2l3 2M6 1l2 2M10 3l2-1M2 7l2-1M6 6l2 2l2-2M1 11l3-1M7 11l2-1M11 9l1 2" fill="none" stroke="#8cc0cc" strokeWidth={1.8} /></svg>
          </div>
          <div className="mt-[2px] flex gap-px"><Folder />{GRAYS.map((c) => <Swatch key={c} c={c} />)}</div>
          <div className="mt-[2px] flex gap-px"><Folder />{BRIGHTS.map((c) => <Swatch key={c} c={c} />)}</div>
        </div>
        <div className="flex flex-1 flex-col items-center justify-between pt-px pb-[2px]"><Chevron dir="up" c="text-[#5f5f5f]" /><Chevron c="text-[#5f5f5f]" /></div>
      </div>
      <div className="flex flex-1 items-center pl-[5px]">
        <svg className="h-[12px] w-[16px]" viewBox="0 0 16 12"><path d="M1 1v10M4 1v10M7.500 1l4 10" fill="none" stroke={G} strokeWidth={2} /><path d="M13 9h3v3z" fill={G} /></svg>
        <svg className="ml-[15px] h-[12px] w-[7px]" viewBox="0 0 7 12"><path d="M7 0v12L0 6z" fill={G} /></svg>
        <svg className="ml-[18px] h-[12px] w-[7px]" viewBox="0 0 7 12"><path d="M0 0v12l7-6z" fill={G} /></svg>
        <svg className="ml-[118px] h-[12px] w-[12px]" viewBox="0 0 12 12"><path d="M1 11l1-3l6-6l2 2l-6 6z" fill={G} /><path d="M8 2l2-2l2 2l-2 2zM1 1l10 10" fill={G} stroke={G} strokeWidth={1.300} /></svg>
      </div>
    </div>
  );
}

function Sep() {
  return <div className="h-[2px] shrink-0 bg-[#4a4a4a]" />;
}

function NumRow({ a, av, b, bv }: { a: string; av: string; b: string; bv: string }) {
  return (
    <div className="flex h-[26px] items-center">
      <span className={LABEL + " w-[14px] pt-[3px]"}>{a}</span>
      <div className={FIELD + " h-[20px] w-[56px] pl-[5px] !text-[10px] !tracking-[-0.4px]"}>{av}</div>
      <span className={LABEL + " ml-[15px] w-[18px] pt-[3px]"}>{b}</span>
      <div className={FIELD + " h-[20px] w-[56px] pl-[5px] !text-[10px] !tracking-[-0.4px]"}>{bv}</div>
    </div>
  );
}

function PropertiesPanel() {
  return (
    <div className="flex h-[565px] shrink-0 overflow-hidden bg-[#535353]">
      <div className="flex w-[238px] flex-col">
        <div className={LABEL + " flex h-[32px] shrink-0 items-center pt-[4px] pl-[10px]"}>Group</div>
        <Sep />
        <div className="h-[123px] shrink-0 pl-[10px]">
          <div className={LABEL + " flex h-[27px] items-center pt-[9px]"}>Transform</div>
          <div className="flex">
            <svg className="mt-[16px] h-[20px] w-[20px]" viewBox="0 0 20 20" shapeRendering="crispEdges">
              <path d="M2.500 2.500h15v15h-15z" fill="none" stroke={G} />
              {[0, 7, 15].map((y) => [0, 7, 15].map((x) => <rect key={x + "," + y} x={x + 0.500} y={y + 0.500} width={4} height={4} fill={x === 7 && y === 7 ? "#fff" : "#535353"} stroke={G} />))}
            </svg>
            <div className="ml-[11px]">
              <NumRow a="X:" av="506.0974 m" b="W:" bv="1014.4831" />
              <NumRow a="Y:" av="336.1638 m" b="H:" bv="672.857 m" />
            </div>
            <svg className="mt-[17px] ml-[13px] h-[20px] w-[18px]" viewBox="0 0 18 20"><path d="M6 8V5q0-3 3-3t3 3v4M12 13v2q0 3-3 3t-3-3v-4M9 7v6M1 3l15 14" fill="none" stroke={G} strokeWidth={1.600} /></svg>
          </div>
          <div className="flex h-[26px] items-center pl-[25px]">
            <svg className="h-[10px] w-[14px]" viewBox="0 0 14 10"><path d="M9 0L1 9h9M6 4q2 2 2 5" fill="none" stroke={G} strokeWidth={1.300} /><path d="M12.500 3h1v1h-1zM12.500 8h1v1h-1z" fill={G} /></svg>
            <div className={FIELD + " ml-[3px] h-[21px] w-[57px]"}>
              <span className="flex-1 pl-[3px] text-[11px]">0°</span>
              <span className="flex h-full w-[19px] items-center justify-center border-l border-[#636363]"><Chevron /></span>
            </div>
            <svg className="ml-[42px] h-[12px] w-[14px]" viewBox="0 0 14 12"><path d="M.7 2v8L4.500 6z" fill="none" stroke={G} /><path d="M13.500 1v10L9 6z" fill={G} /><path d="M7 0v12" stroke={G} strokeDasharray="1 1" /></svg>
            <svg className="ml-[12px] h-[14px] w-[12px]" viewBox="0 0 12 14"><path d="M2 13.300h8L6 9.500z" fill="none" stroke={G} /><path d="M1 .500h10L6 5z" fill={G} /><path d="M0 7h12" stroke={G} strokeDasharray="1 1" /></svg>
          </div>
          <div className="mt-[7px] flex justify-end pr-[7px]"><Dots /></div>
        </div>
        <Sep />
        <div className="h-[170px] shrink-0 pl-[10px]">
          <div className={LABEL + " flex h-[33px] items-center pt-[3px]"}>Appearance</div>
          <div className="flex h-[26px] items-center">
            <span className="mr-[12px] flex h-[18px] w-[18px] items-center justify-center border border-[#2c2c2c] font-['Open_Sans'] text-[12px] font-bold text-white">?</span>
            <span className={LABEL}>Fill</span>
          </div>
          <div className="flex h-[30px] items-center">
            <span className="relative mr-[12px] h-[18px] w-[18px] border border-[#2c2c2c] font-['Open_Sans'] text-[7px] leading-[7px] font-bold text-[#cfe0f0]">
              <i className="absolute top-[4px] left-[4px] h-[9px] w-[9px] border-2 border-[#333]" />
              <b className="absolute top-0 left-px">?</b><b className="absolute top-0 right-0">?</b><b className="absolute bottom-0 left-px">?</b><b className="absolute right-0 bottom-0">?</b>
            </span>
            <span className="w-[49px] font-['Open_Sans'] text-[10.5px] font-semibold tracking-[-0.5px] text-white"><span className="border-b border-dotted border-white leading-[13px]">Stroke</span></span>
            <div className={FIELD + " h-[21px] w-[70px]"}>
              <span className="flex h-full w-[18px] flex-col items-center border-r border-[#636363] bg-[#4b4b4b]"><Chevron dir="up" /><Chevron /></span>
              <span className="flex-1" />
              <span className="flex h-full w-[18px] items-center justify-center border-l border-[#636363] bg-[#4b4b4b]"><Chevron /></span>
            </div>
          </div>
          <div className="flex h-[28px] items-center">
            <span className="mr-[13px] ml-px h-[16px] w-[16px] border border-[#c8c8c8] bg-[repeating-conic-gradient(#777_0_25%,#5a5a5a_0_50%)] bg-[length:8px_8px]" />
            <span className="w-[49px] font-['Open_Sans'] text-[10.5px] font-semibold tracking-[-0.5px] text-white"><span className="border-b border-dotted border-white leading-[13px]">Opacity</span></span>
            <div className={FIELD + " h-[21px] w-[70px]"}>
              <span className="flex-1 pl-[4px]">100%</span>
              <span className="flex h-full w-[18px] items-center justify-center border-l border-[#636363] bg-[#4b4b4b]"><Chevron dir="right" /></span>
            </div>
          </div>
          <div className="mt-[8px] h-[23px] pl-[7px] font-['Open_Sans'] text-[14px] tracking-[-0.5px] text-[#d2d2d2] italic">fx<span className="text-[10px]">.</span></div>
          <div className="mt-[11px] flex justify-end pr-[7px]"><Dots /></div>
        </div>
        <Sep />
        <div className="h-[83px] shrink-0 pl-[10px]">
          <div className={LABEL + " flex h-[38px] items-center"}>Align</div>
          <div className="flex items-center pl-[3px]">
            <ArtboardIcon />
            <div className="ml-[12px] flex gap-[12px]">
              {["left", "centerH", "right", "top", "centerV", "bottom"].map((n) => <AlignIcon key={n} n={n} />)}
            </div>
          </div>
          <div className="mt-[16px] flex justify-end pr-[7px]"><Dots /></div>
        </div>
        <Sep />
        <div className="h-[73px] shrink-0 pl-[10px]">
          <div className={LABEL + " flex h-[28px] items-center pt-[5px]"}>Pathfinder</div>
          <div className="flex h-[28px] items-center gap-[17px] pl-[6px]">
            <svg className="mt-[10px] h-[14px] w-[14px]" viewBox="0 0 14 14"><path d="M0 0h10v4h4v10H4v-4H0z" fill={G} /></svg>
            <svg className="mt-[10px] h-[14px] w-[14px]" viewBox="0 0 14 14"><path d="M0 0h10v4H4v6H0z" fill={G} /><path d="M4.500 4.500h9v9h-9z" fill="#535353" stroke={G} /></svg>
            <svg className="mt-[10px] h-[14px] w-[14px]" viewBox="0 0 14 14"><path d="M.5.500h9v9h-9zM4.500 4.500h9v9h-9z" fill="none" stroke={G} /><path d="M4 4h6v6H4z" fill={G} /></svg>
            <svg className="mt-[10px] h-[14px] w-[14px]" viewBox="0 0 14 14"><path d="M0 0h10v4h4v10H4v-4H0zM4.500 4.500v5h5v-5z" fill={G} fillRule="evenodd" /></svg>
            <span className={LABEL + " mt-[-4px] mr-[3px] ml-auto flex h-[22px] w-[63px] items-center justify-center rounded-[2px] bg-[#595959] !text-[#777]"}>Expand</span>
          </div>
          <div className="mt-[4px] flex justify-end pr-[7px]"><Dots /></div>
        </div>
        <Sep />
        <div className="shrink-0 pl-[10px] font-['Open_Sans'] text-[10.5px] font-semibold tracking-[-0.45px] text-white">
          <div className={LABEL + " flex h-[39px] items-center pt-[7px] font-normal"}>Quick Actions</div>
          <div className="flex gap-[10px]">
            <span className="flex h-[21px] w-[109px] shrink-0 items-center justify-center rounded-[3px] border border-[#808080]">Ungroup</span>
            <span className="flex h-[21px] w-[109px] shrink-0 items-center justify-center rounded-[3px] border border-[#808080]">Isolate Group</span>
          </div>
          <div className="mt-[10px] flex gap-[10px]"><span className="h-[10px] w-[114px] shrink-0 rounded-[3px] border border-[#707070]" /><span className="h-[10px] w-[102px] shrink-0 rounded-[3px] border border-[#707070]" /></div>
        </div>
      </div>
      <div className="flex h-[550px] flex-1 flex-col items-center bg-[#4a4a4a] pt-[1px]">
        <Chevron dir="up" c="text-[#a0a0a0]" />
        <span className="mt-[3px] h-[106px] w-[10px] flex-1 rounded-full bg-[#5f5f5f]" />
        <span className="h-[71px]" />
      </div>
    </div>
  );
}

interface LayerRow { depth: number; open?: boolean; name: string; art?: "map" | "dots" | "line" | "lines" | "tick"; filled?: boolean; sel?: boolean }
const LAYERS: LayerRow[] = [
  { depth: 0, open: true, name: "Layer 1", art: "map" },
  { depth: 1, name: "<Group>", art: "dots" },
  { depth: 1, open: true, name: "<Group>", art: "tick" },
  { depth: 2, name: "<Gr...", art: "line", filled: true },
  { depth: 2, name: "<Gr...", art: "lines", filled: true },
  { depth: 2, name: "<Gr...", filled: true },
  { depth: 2, name: "<Gr...", filled: true },
  { depth: 2, name: "<Gr...", filled: true },
  { depth: 2, name: "<Gr..." },
  { depth: 2, name: "<Gr...", filled: true },
  { depth: 2, name: "<Gr..." },
  { depth: 1, name: "<Group>" },
  { depth: 1, name: "<Group>", art: "map", sel: true },
];
const INDENT_OPEN = ["pl-[5px]", "pl-[28px]", "pl-[51px]"];
const INDENT_CLOSED = ["pl-[3px]", "pl-[26px]", "pl-[49px]"];

function LayerItem({ row, i }: { row: LayerRow; i: number }) {
  return (
    <div className={"flex h-[21px] border-b border-[#606060] " + (i === 0 ? "bg-[#4f657d]" : "")}>
      <span className="flex w-[20px] items-center justify-center border-r border-[#606060]">
        <svg className="h-[9px] w-[13px]" viewBox="0 0 13 9"><path d="M.5 4.500Q6.500-3 12.500 4.500Q6.500 12 .500 4.500z" fill={G} /><circle cx={6.500} cy={4.500} r={2.900} fill="#4a4a4a" /><circle cx={6.500} cy={4.500} r={1.500} fill={G} /></svg>
      </span>
      <span className="w-[22px] border-r border-[#606060]" />
      <span className="my-[1px] ml-[1px] w-[3px] bg-[#4f80ff]" />
      <span className={"ml-[1px] flex w-[155px] items-center border-x border-[#606060] " + (row.open ? INDENT_OPEN : INDENT_CLOSED)[row.depth]}>
        <Chevron dir={row.open ? "down" : "right"} />
        <span className={row.depth === 0 ? "ml-[9px]" : row.open ? "ml-[9px]" : "ml-[11px]"}>
          {row.art === "map" ? <Thumb size="h-[18px] w-[18px]" /> : (
            <span className="block h-[18px] w-[18px] border border-black bg-white">
              <svg className="block h-[16px] w-[16px]" viewBox="0 0 16 16">
                {row.art === "dots" && <path d="M3 6h1M5 4h1M7 4h1M11 4h1M3 10h1M9 13h1" stroke="#999" />}
                {row.art === "tick" && <path d="M14 12h2" stroke="#555" />}
                {row.art === "line" && <path d="M0 7.500h16" stroke="#000" strokeWidth={2} strokeDasharray="4 .5 2 .3" />}
                {row.art === "lines" && <path d="M0 6.500h16M1 10.500h14" stroke="#000" strokeWidth={3} strokeDasharray="4 .5 2 .3" />}
              </svg>
            </span>
          )}
        </span>
        <span className="pt-[1px] pl-[5px] font-['Open_Sans'] text-[11px] tracking-[-0.3px] text-[#ececec]">{row.name}</span>
      </span>
      <span className="flex flex-1 items-center pl-[5px]">
        <svg className="-ml-px h-[12px] w-[12px]" viewBox="0 0 12 12">
          <circle cx={6} cy={6} r={row.sel ? 3 : 3.800} fill={row.filled ? "#999" : "none"} stroke={G} strokeWidth={1.200} />
          {row.sel && <circle cx={6} cy={6} r={5.400} fill="none" stroke={G} strokeWidth={1} />}
        </svg>
        {i === 0 && <i className="ml-[4px] h-[6px] w-[6px] border border-black bg-[#4f80ff]" />}
        {row.sel && <i className="ml-[4px] h-[8px] w-[8px] border border-black bg-[#4f80ff]" />}
        {i === 0 && <svg className="mb-auto ml-auto h-[6px] w-[6px]" viewBox="0 0 6 6"><path d="M0 0h6v6z" fill="#ddd" /></svg>}
      </span>
    </div>
  );
}

function LayersPanel() {
  return (
    <div className="flex flex-1 flex-col bg-[#535353] pt-[6px] pr-[6px] pl-[5px]">
      <div className="h-[349px] shrink-0 rounded-[2px] border border-[#606060]">
        {LAYERS.map((r, i) => <LayerItem key={i} row={r} i={i} />)}
      </div>
      <div className="flex flex-1 items-center">
        <span className={LABEL + " w-[75px] !tracking-[-0.2px]"}>1 Layer</span>
        <svg className="h-[13px] w-[13px]" viewBox="0 0 13 13"><path d="M6 2.500H1v10h9V8M8 .700h4.300V5M12 1L7 6" fill="none" stroke={G} strokeWidth={1.200} /></svg>
        <svg className="ml-[13px] h-[13px] w-[13px]" viewBox="0 0 13 13"><circle cx={5} cy={5} r={4} fill="none" stroke={G} strokeWidth={1.500} /><path d="M8 8l4 4" stroke={G} strokeWidth={2} /></svg>
        <svg className="ml-[13px] h-[12px] w-[12px]" viewBox="0 0 12 12"><path d="M.5 1.500h7v7h-7z" fill="none" stroke={G} /><path d="M4 4h4v4H4z" fill={G} /><path d="M8 4.500h3v6H5V9" fill="none" stroke="#999" /></svg>
        <svg className="ml-[13px] h-[12px] w-[16px]" viewBox="0 0 16 12"><path d="M6.500 2.500h8v8h-8zM10.500 4v5M8 6.500h5M1.500 1v4.500h3M3.500 3.500l2 2l-2 2" fill="none" stroke={G} /></svg>
        <svg className="ml-[14px] h-[12px] w-[12px]" viewBox="0 0 12 12"><path d="M.5.500h10v10H.500zM5.500 3v5M3 5.500h5" fill="none" stroke={G} /></svg>
        <svg className="ml-[14px] h-[13px] w-[11px]" viewBox="0 0 11 13"><path d="M0 2.500h11M4 2V.500h3V2M1.500 3v9.500h8V3M3.500 5v6M5.500 5v6M7.500 5v6" fill="none" stroke="#777" /></svg>
      </div>
    </div>
  );
}

/* ------------------------------------------------------------------ */
/* Frame                                                               */
/* ------------------------------------------------------------------ */

const MENU: [string, string, string, string][] = [
  ["", "F", "ile", "w-[33px]"], ["", "E", "dit", "w-[35px]"], ["", "O", "bject", "w-[50px]"], ["", "T", "ype", "w-[40px]"], ["", "S", "elect", "w-[46px]"],
  ["Effe", "c", "t", "w-[45px]"], ["", "V", "iew", "w-[39px]"], ["", "W", "indow", "w-[58px]"], ["", "H", "elp", "w-[37px]"],
];

function MenuBar() {
  return (
    <div className="flex h-[30px] shrink-0 items-center bg-[#535353] pb-px font-['Open_Sans'] text-[12px] text-[#f0f0f0]">
      <span className="ml-[10px] flex h-[15px] w-[16px] items-center justify-center rounded-[3px] bg-[#330000] text-[8.5px] font-bold text-[#ff9a00]">Ai</span>
      <svg className="ml-[14px] h-[16px] w-[18px]" viewBox="0 0 18 16"><path d="M9 0L0 8.500h2.500V16H7v-5h4v5h4.500V8.500H18L15 5.700V1.500h-2v2.300z" fill={G} /></svg>
      <i className="ml-[15px] h-[20px] w-px bg-[#484848]" />
      <div className="flex pl-[15px] tracking-[-0.35px]">
        {MENU.map(([a, u, b, w]) => (
          <span key={u + b} className={"shrink-0 whitespace-nowrap " + w}>{a}<u className="underline-offset-2">{u}</u>{b}</span>
        ))}
      </div>
      <i className="h-[20px] w-px bg-[#484848]" />
      <svg className="ml-[11px] h-[11px] w-[17px]" viewBox="0 0 17 11"><path d="M0 0h8v11H0zM9 0h8v5H9zM9 6h8v5H9z" fill={G} /></svg>
      <span className="ml-[7px]"><Chevron /></span>
      <svg className="ml-[17px] h-[15px] w-[18px]" viewBox="0 0 18 15"><path d="M1 1h16v13H1z" fill="none" stroke={G} strokeWidth={1.500} /><path d="M7 3h2v4l5 1v4l-2 3H8l-3-4l2-1z" fill={G} /></svg>
      <svg className="ml-auto h-[17px] w-[12px]" viewBox="0 0 12 17"><path d="M4 12Q4 10 2.500 8.500Q1 7 1 5.500Q1.500 1 6 1Q10.500 1 11 5.500Q11 7 9.500 8.500Q8 10 8 12z" fill="none" stroke={G} strokeWidth={1.200} /><path d="M4 13h4v2l-2 2l-2-2z" fill={G} /></svg>
      <i className="ml-[16px] h-[20px] w-px bg-[#484848]" />
      <span className="ml-[12px] w-[60px] tracking-[-0.45px]">Essentials</span>
      <Chevron c="text-[#d8d8d8]" />
      <i className="ml-[12px] h-[20px] w-px bg-[#484848]" />
      <div className="ml-[9px] flex h-[20px] w-[169px] items-center rounded-[3px] border border-[#636363] bg-[#454545] text-[#8c8c8c]">
        <svg className="ml-[3px] h-[12px] w-[12px]" viewBox="0 0 13 13"><circle cx={5} cy={5} r={4} fill="none" stroke={G} strokeWidth={1.500} /><path d="M8 8l4 4" stroke={G} strokeWidth={2} /></svg>
        <Chevron c="text-[#c8c8c8]" />
        <span className="text-[11.5px] tracking-[-0.4px]">Search Adobe Stock</span>
      </div>
      <div className="ml-[8px] flex h-[19px] w-[84px] self-start rounded-b-[3px] border border-t-0 border-[#686868]">
        <span className="flex w-[28px] items-center justify-center border-r border-[#686868] pt-[5px]"><i className="h-[3px] w-[10px] bg-[#c0c0c0]" /></span>
        <span className="flex w-[27px] items-center justify-center border-r border-[#686868]"><svg className="h-[10px] w-[12px]" viewBox="0 0 12 10"><path d="M5 1h6v5H5z" fill="none" stroke="#b8b8b8" strokeWidth={2} /><path d="M1 4h5v5H1z" fill="#535353" stroke="#b8b8b8" strokeWidth={2} /></svg></span>
        <span className="flex flex-1 items-center justify-center"><svg className="h-[9px] w-[10px]" viewBox="0 0 10 9"><path d="M1 .500l8 8M9 .500l-8 8" stroke="#b8b8b8" strokeWidth={2} /></svg></span>
      </div>
      <span className="w-[3px]" />
    </div>
  );
}

function StatusBar() {
  return (
    <div className="flex h-[16px] shrink-0 items-stretch bg-[#4b4b4b] font-['Open_Sans'] text-[10.5px] leading-[17px] tracking-[-0.3px] text-white">
      <span className="w-[4px] bg-[#535353]" />
      <span className="w-[49px] bg-[#434343] pl-[3px]">16.67%</span>
      <span className="flex w-[18px] items-center justify-center border-l border-[#606060] bg-[#434343]"><Chevron /></span>
      <span className="flex w-[42px] items-center gap-[9px] bg-[#535353] pl-[9px]">
        <svg className="h-[8px] w-[9px]" viewBox="0 0 9 8"><path d="M1 0v8" stroke="#777" strokeWidth={2} /><path d="M8 0v8L3 4z" fill="#777" /></svg>
        <svg className="h-[8px] w-[5px]" viewBox="0 0 5 8"><path d="M5 0v8L0 4z" fill="#777" /></svg>
      </span>
      <span className="w-[40px] bg-[#434343] pl-[4px]">1</span>
      <span className="flex w-[18px] items-center justify-center border-l border-[#606060] bg-[#434343]"><Chevron /></span>
      <span className="flex w-[42px] items-center gap-[10px] bg-[#535353] pl-[9px]">
        <svg className="h-[8px] w-[5px]" viewBox="0 0 5 8"><path d="M0 0v8l5-4z" fill="#777" /></svg>
        <svg className="h-[8px] w-[9px]" viewBox="0 0 9 8"><path d="M8 0v8" stroke="#777" strokeWidth={2} /><path d="M1 0v8l5-4z" fill="#777" /></svg>
      </span>
      <span className="w-[201px] bg-[#515151] text-center text-[#c8c8c8]">Selection</span>
      <span className="flex w-[18px] items-center justify-center bg-[#535353]"><svg className="h-[8px] w-[5px]" viewBox="0 0 5 8"><path d="M0 0v8l5-4z" fill={G} /></svg></span>
      <span className="flex w-[17px] items-center justify-center"><Chevron dir="left" c="text-[#a0a0a0]" /></span>
      <span className="mt-px ml-[418px] w-[25px] rounded-full bg-[#606060]" />
      <span className="mr-[3px] ml-auto flex items-center"><Chevron dir="right" c="text-[#a0a0a0]" /></span>
      <span className="w-[16px] bg-[#535353]" />
    </div>
  );
}

function Document() {
  return (
    <div className="flex w-[1351px] shrink-0 flex-col">
      <div className="flex h-[30px] shrink-0 border-b border-[#383838] bg-[#424242] font-['Roboto'] text-[11.5px] font-medium">
        <div className="flex w-[246px] items-center justify-between border-r border-[#383838] pr-[7px] pl-[9px] text-[#9e9e9e]">
          <span className="tracking-[0.12px] whitespace-nowrap">Untitled-1 @ 50% (CMYK/GPU Preview)</span>
          <svg className="h-[7px] w-[7px]" viewBox="0 0 7 7"><path d="M.5.500l6 6M6.500.500l-6 6" stroke="#bbb" strokeWidth={1.600} /></svg>
        </div>
        <div className="flex w-[571px] items-center justify-between border-r border-[#383838] bg-[#535353] pr-[5px] pl-[9px] text-[#f2f2f2]">
          <span className="font-bold tracking-[-0.08px] whitespace-nowrap">Electoral_boundaries_during_the_Singapore_general_elections_2020.svg @ 16.67% (RGB/GPU Preview)</span>
          <svg className="h-[7px] w-[7px]" viewBox="0 0 7 7"><path d="M.5.500l6 6M6.500.500l-6 6" stroke="#eee" strokeWidth={1.600} /></svg>
        </div>
      </div>
      <div className="flex h-[963px]">
        <div className="w-[1335px] bg-[#606060]"><Canvas /></div>
        <div className="flex w-[16px] flex-col items-center bg-[#4b4b4b] py-[3px]">
          <Chevron dir="up" c="text-[#a0a0a0]" />
          <span className="mt-[449px] h-[25px] w-[15px] rounded-full bg-[#606060]" />
          <span className="mt-auto"><Chevron c="text-[#a0a0a0]" /></span>
        </div>
      </div>
      <StatusBar />
    </div>
  );
}

export default function App() {
  return (
    <div className="flex h-[1048px] w-[1928px] flex-col overflow-hidden bg-[#1b1b1b]">
      <div className="flex h-[1039px]">
        <div className="flex w-[8px] shrink-0 flex-col bg-white">
          <div className="h-[42px] bg-[#e4e9ed]" />
          <div className="h-[85px] bg-white" />
          <div className="h-[2px] bg-[#c8c8c8]" />
          <div className="h-[77px] bg-[#f0f0f0] pt-[11px]"><i className="block h-[2px] w-[2px] bg-[#333]" /></div>
          <div className="h-[128px] w-full bg-[#f0f0f0]"><i className="block h-full w-[6px] bg-[#c1c1c1]" /></div>
          <div className="h-[637px] bg-[#f0f0f0]" />
          <div className="flex-1 bg-white" />
          <div className="h-[9px] bg-[#1b1b1b]" />
        </div>
        <div className="flex w-[1920px] flex-col bg-[#383838]">
          <MenuBar />
          <div className="flex h-[1009px]">
            <Toolbar />
            <span className="w-[3px] shrink-0 border-x border-[#383838] bg-[#484848]" />
            <Document />
            <span className="w-[3px] shrink-0 border-x border-[#383838] bg-[#484848]" />
            <div className="flex w-[239px] shrink-0 flex-col pb-px">
              <div className="flex h-[12px] shrink-0 items-center justify-end bg-[#424242] pr-[6px]"><Collapse /></div>
              <span className="h-px shrink-0" />
              <Tabs items={["Color", "Color Guide"]} active={0} widths={["w-[51px]", "w-[74px]"]} />
              <ColorPanel />
              <span className="h-[2px] shrink-0" />
              <Tabs items={["Stroke", "Transparency"]} active={1} widths={["w-[51px]", "w-[87px]"]} />
              <TransparencyPanel />
              <span className="h-[2px] shrink-0" />
              <Tabs items={["Transform", "Align", "Pathfinder"]} active={1} widths={["w-[67px]", "w-[50px]", "w-[68px]"]} />
              <AlignPanel />
              <span className="h-[2px] shrink-0" />
              <Tabs items={["Web", "Swatches", "Symbols", "Brushes"]} active={0} arrow={false} widths={["w-[41px]", "w-[58px]", "w-[54px]", "w-[46px]"]} />
              <SwatchesPanel />
            </div>
            <span className="w-[2px] shrink-0" />
            <div className="flex w-[250px] shrink-0 flex-col pb-px">
              <div className="flex h-[12px] shrink-0 items-center justify-end bg-[#424242] pr-[6px]"><Collapse /></div>
              <span className="h-px shrink-0" />
              <Tabs items={["Properties", "Libraries"]} active={0} arrow={false} menu={false} widths={["w-[67px]", "w-[58px]"]} />
              <PropertiesPanel />
              <span className="h-[2px] shrink-0" />
              <Tabs items={["Layers"]} active={0} arrow={false} widths={["w-[48px]"]} />
              <LayersPanel />
            </div>
          </div>
        </div>
      </div>
      <div className="flex h-[9px] justify-between overflow-hidden bg-[#1b1b1b] font-['Open_Sans'] text-[12px] text-white">
        <span className="ml-[742px] h-full w-[47px] bg-[#3c3c3c]" />
        <span className="mt-[3px] mr-[10px] leading-[16px] whitespace-nowrap">1:51 AM</span>
      </div>
    </div>
  );
}
